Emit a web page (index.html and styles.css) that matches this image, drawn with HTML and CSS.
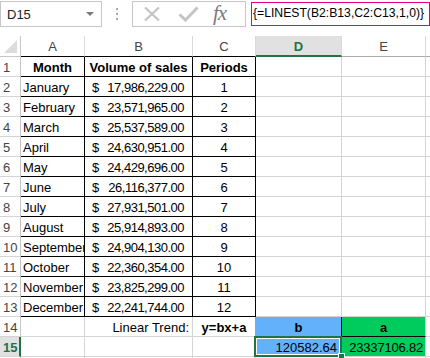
FILE: index.html
```html
<html lang="en">

<head>
    <meta charset="UTF-8">
    <meta name="viewport" content="width=device-width, initial-scale=1.0">
    <title>LINEST trend</title>
    <link rel="stylesheet" href="styles.css">
</head>

<body>
    <!-- Formula Bar -->
    <div class="formula-bar">
        <div class="name-box">
            <span>D15</span>
            <svg class="drop" width="8" height="5" viewBox="0 0 8 5"><path d="M0 0 H8 L4 4 Z" fill="#7a7a7a"/></svg>
        </div>
        <div class="grip"><i></i><i></i><i></i></div>
        <div class="fx-buttons">
            <svg class="cancel" width="18" height="16" viewBox="0 0 18 16">
                <path d="M2 1.5 L16 14.5 M16 1.5 L2 14.5" stroke="#c4c4c4" stroke-width="2.2" fill="none"/>
            </svg>
            <svg class="enter" width="21" height="16" viewBox="0 0 21 16">
                <path d="M1.5 8.5 L7.5 14 L19.5 1.5" stroke="#c4c4c4" stroke-width="3" fill="none"/>
            </svg>
            <span class="fx">fx</span>
        </div>
        <div class="formula-input">{=LINEST(B2:B13,C2:C13,1,0)}</div>
    </div>

    <!-- Worksheet -->
    <div class="sheet">
        <div class="corner"><svg width="13" height="13" viewBox="0 0 13 13"><path d="M13 0 V13 H0 Z" fill="#dcdcdc"/></svg></div>
        <div class="hdr tb">A</div>
        <div class="hdr tb">B</div>
        <div class="hdr tb">C</div>
        <div class="hdr active">D</div>
        <div class="hdr">E</div>
        <div class="hdr"></div>

        <div class="rh">1</div>
        <div class="c t head">Month</div>
        <div class="c t head">Volume of sales</div>
        <div class="c t head">Periods</div>
        <div class="c"></div><div class="c"></div><div class="c"></div>

        <div class="rh">2</div>
        <div class="c t">January</div>
        <div class="c t money"><span>$</span><span>17,986,229.00</span></div>
        <div class="c t mid">1</div>
        <div class="c"></div><div class="c"></div><div class="c"></div>

        <div class="rh">3</div>
        <div class="c t">February</div>
        <div class="c t money"><span>$</span><span>23,571,965.00</span></div>
        <div class="c t mid">2</div>
        <div class="c"></div><div class="c"></div><div class="c"></div>

        <div class="rh">4</div>
        <div class="c t">March</div>
        <div class="c t money"><span>$</span><span>25,537,589.00</span></div>
        <div class="c t mid">3</div>
        <div class="c"></div><div class="c"></div><div class="c"></div>

        <div class="rh">5</div>
        <div class="c t">April</div>
        <div class="c t money"><span>$</span><span>24,630,951.00</span></div>
        <div class="c t mid">4</div>
        <div class="c"></div><div class="c"></div><div class="c"></div>

        <div class="rh">6</div>
        <div class="c t">May</div>
        <div class="c t money"><span>$</span><span>24,429,696.00</span></div>
        <div class="c t mid">5</div>
        <div class="c"></div><div class="c"></div><div class="c"></div>

        <div class="rh">7</div>
        <div class="c t">June</div>
        <div class="c t money"><span>$</span><span>26,116,377.00</span></div>
        <div class="c t mid">6</div>
        <div class="c"></div><div class="c"></div><div class="c"></div>

        <div class="rh">8</div>
        <div class="c t">July</div>
        <div class="c t money"><span>$</span><span>27,931,501.00</span></div>
        <div class="c t mid">7</div>
        <div class="c"></div><div class="c"></div><div class="c"></div>

        <div class="rh">9</div>
        <div class="c t">August</div>
        <div class="c t money"><span>$</span><span>25,914,893.00</span></div>
        <div class="c t mid">8</div>
        <div class="c"></div><div class="c"></div><div class="c"></div>

        <div class="rh">10</div>
        <div class="c t">September</div>
        <div class="c t money"><span>$</span><span>24,904,130.00</span></div>
        <div class="c t mid">9</div>
        <div class="c"></div><div class="c"></div><div class="c"></div>

        <div class="rh">11</div>
        <div class="c t">October</div>
        <div class="c t money"><span>$</span><span>22,360,354.00</span></div>
        <div class="c t mid">10</div>
        <div class="c"></div><div class="c"></div><div class="c"></div>

        <div class="rh">12</div>
        <div class="c t">November</div>
        <div class="c t money"><span>$</span><span>23,825,299.00</span></div>
        <div class="c t mid">11</div>
        <div class="c"></div><div class="c"></div><div class="c"></div>

        <div class="rh">13</div>
        <div class="c t">December</div>
        <div class="c t money"><span>$</span><span>22,241,744.00</span></div>
        <div class="c t mid">12</div>
        <div class="c"></div><div class="c"></div><div class="c"></div>

        <div class="rh">14</div>
        <div class="c"></div>
        <div class="c right">Linear Trend:</div>
        <div class="c head before-blue">y=bx+a</div>
        <div class="c head blue coef-b">b</div>
        <div class="c head green coef-a">a</div>
        <div class="c"></div>

        <div class="rh active-row">15</div>
        <div class="c"></div>
        <div class="c"></div>
        <div class="c"></div>
        <div class="c blue right sel">120582.64<span class="handle"></span></div>
        <div class="c green right val-a">23337106.82</div>
        <div class="c"></div>

        <div class="rh"></div>
        <div class="c"></div><div class="c"></div><div class="c"></div>
        <div class="c"></div><div class="c"></div><div class="c"></div>
    </div>
</body>

</html>
```

FILE: styles.css
```css
/* General Styles */
body {
    margin: 0;
    background-color: #ffffff;
    font-family: "Liberation Sans", Arial, sans-serif;
    font-size: 13px;
    color: #000;
    overflow: hidden;
}

/* Formula bar */
.formula-bar {
    display: flex;
    align-items: flex-start;
    height: 36px;
    padding-top: 1px;
    box-sizing: border-box;
}

.name-box {
    width: 102px;
    height: 26px;
    box-sizing: border-box;
    border: 1px solid #c6c6c6;
    display: flex;
    align-items: center;
    justify-content: space-between;
    padding: 0 7px 0 6px;
    color: #222;
}

.grip {
    width: 30px;
    height: 26px;
    display: flex;
    flex-direction: column;
    align-items: center;
    justify-content: center;
    gap: 3px;
}

.grip i {
    display: block;
    width: 2px;
    height: 2px;
    background-color: #a8a8a8;
}

.fx-buttons {
    width: 114px;
    height: 26px;
    box-sizing: border-box;
    border: 1px solid #c6c6c6;
    display: flex;
    align-items: center;
    padding-left: 10px;
}

.fx-buttons .enter {
    margin-left: 17px;
}

.fx {
    margin-left: 14px;
    font-family: "Liberation Serif", "Times New Roman", serif;
    font-style: italic;
    font-size: 21px;
    color: #7a7a7a;
    letter-spacing: -1px;
    line-height: 20px;
    padding-bottom: 2px;
}

.formula-input {
    margin-left: 5px;
    margin-top: 1px;
    width: 179px;
    height: 24px;
    box-sizing: border-box;
    border: 1px solid #e6007e;
    padding: 3px 0 0 1px;
    font-size: 12.2px;
    white-space: nowrap;
    overflow: hidden;
}

/* Worksheet grid */
.sheet {
    display: grid;
    grid-template-columns: 21px 64px 108px 63px 86px 84px 1fr;
    grid-template-rows: 21px repeat(15, 20px) 1px;
}

.sheet > div {
    box-sizing: border-box;
    border-right: 1px solid #d4d4d4;
    border-bottom: 1px solid #d4d4d4;
    white-space: nowrap;
    overflow: hidden;
}

.corner {
    display: flex;
    align-items: flex-end;
    justify-content: flex-end;
    padding: 0 3px 3px 0;
    border-color: #c6c6c6 !important;
}

.hdr {
    display: flex;
    align-items: center;
    justify-content: center;
    color: #444;
    border-bottom-color: #ababab !important;
    border-right-color: #d9d9d9 !important;
    padding-top: 1px;
}

.hdr.tb {
    border-bottom-color: #000 !important;
}

.hdr.active {
    background-color: #e1e1e1;
    color: #217346;
    font-weight: bold;
    border-bottom: 2px solid #217346 !important;
}

.rh {
    color: #444;
    padding: 2px 0 0 3px;
    line-height: 17px;
    border-right-color: #c6c6c6 !important;
}

.rh.active-row {
    background-color: #e1e1e1;
    color: #217346;
    font-weight: bold;
    border-right: 2px solid #217346 !important;
}

.c {
    padding: 2px 2px 0 2px;
    line-height: 17px;
}

/* bordered table A1:C13 */
.c.t {
    border-right-color: #000;
    border-bottom-color: #000;
}

.head {
    font-weight: bold;
    text-align: center;
}

.mid {
    text-align: center;
}

.right {
    text-align: right;
    padding-right: 3px;
}

.money {
    display: flex;
    justify-content: space-between;
    padding: 2px 8px 0 7px;
    letter-spacing: -0.5px;
}

.before-blue {
    border-right-color: #63b1fb !important;
}

.blue {
    background-color: #63b1fb;
}

.green {
    background-color: #00cc5e;
}

.coef-b {
    border-right-color: #000 !important;
    border-bottom-color: #000 !important;
}

.coef-a {
    border-bottom-color: #000 !important;
}

.val-a {
    padding-right: 2px;
    letter-spacing: -0.2px;
}

/* selected cell D15 */
.sel {
    position: relative;
    overflow: visible !important;
    padding-right: 4px;
}

.sel::after {
    content: "";
    position: absolute;
    left: -2px;
    top: -1px;
    right: -1px;
    bottom: -1px;
    border: 2px solid #217346;
    box-shadow: inset 0 0 0 1px #ffffff;
}

.handle {
    position: absolute;
    right: -4px;
    bottom: -4px;
    width: 5px;
    height: 5px;
    background-color: #217346;
    border: 1px solid #ffffff;
    z-index: 2;
}
```
